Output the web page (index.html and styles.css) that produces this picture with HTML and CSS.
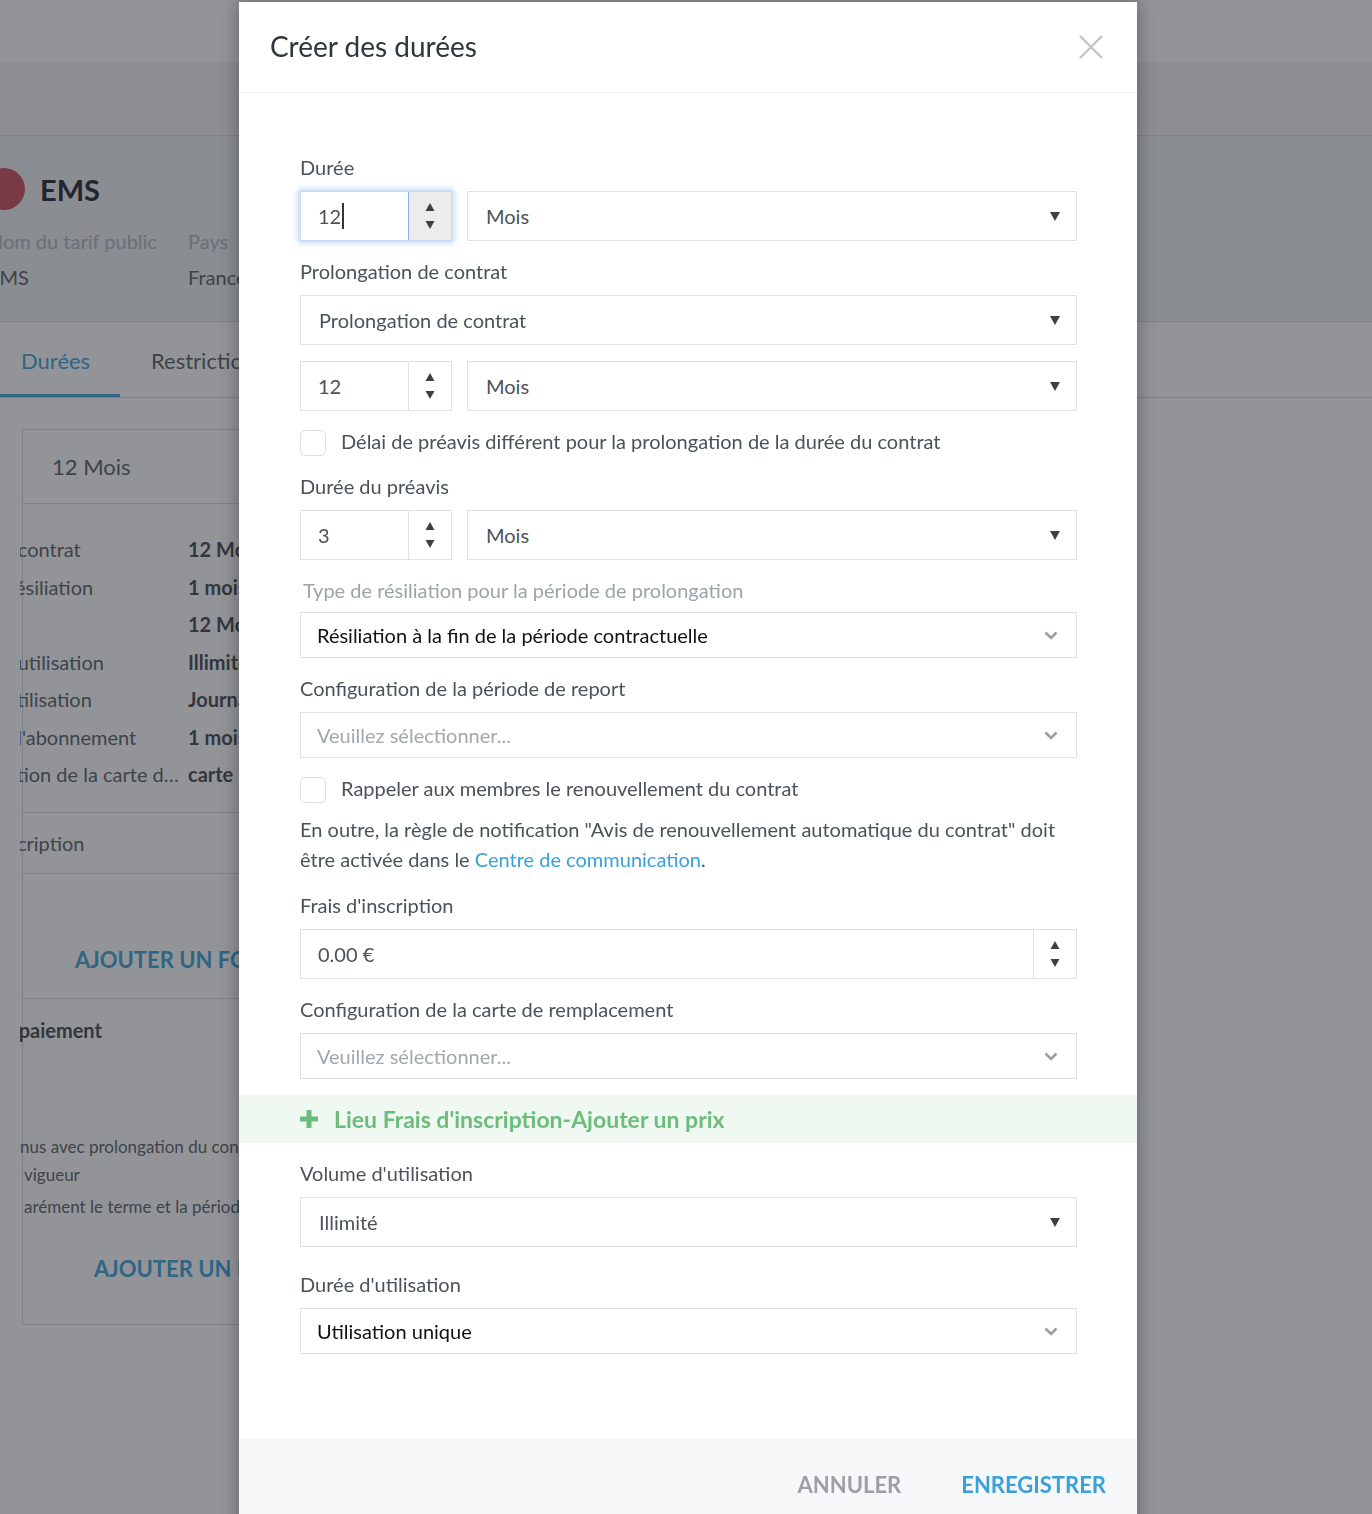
FILE: index.html
```html
<!DOCTYPE html>
<html lang="fr">
<head>
    <meta charset="UTF-8">
    <meta name="viewport" content="width=device-width, initial-scale=1.0">
    <title>Créer des durées</title>
    <link rel="stylesheet" href="styles.css">
</head>
<body>
    <div class="page">
        <div class="topbar"></div>
        <div class="subbar"></div>
        <div class="tariff-head">
            <div class="tariff-title"><span class="dot"></span><h2>EMS</h2></div>
            <div class="tariff-meta">
                <div class="meta-col">
                    <div class="meta-key">Nom du tarif public</div>
                    <div class="meta-val">EMS</div>
                </div>
                <div class="meta-col">
                    <div class="meta-key">Pays</div>
                    <div class="meta-val">France</div>
                </div>
            </div>
        </div>
        <div class="tabs">
            <div class="tab active">Durées</div>
            <div class="tab">Restrictions</div>
        </div>
        <div class="content">
            <div class="card">
                <div class="card-head">12 Mois</div>
                <div class="card-rows">
                    <div class="row"><div class="row-key"><span>Durée du contrat</span></div><div class="row-val">12 Mois</div></div>
                    <div class="row"><div class="row-key"><span>Délai de résiliation</span></div><div class="row-val">1 mois</div></div>
                    <div class="row"><div class="row-key"><span>Report</span></div><div class="row-val">12 Mois</div></div>
                    <div class="row"><div class="row-key"><span>Volume d'utilisation</span></div><div class="row-val">Illimité</div></div>
                    <div class="row"><div class="row-key"><span>Durée d'utilisation</span></div><div class="row-val">Journalier</div></div>
                    <div class="row"><div class="row-key"><span>Durée de l'abonnement</span></div><div class="row-val">1 mois</div></div>
                    <div class="row"><div class="row-key"><span>Configuration de la carte de remplacement</span></div><div class="row-val">carte</div></div>
                </div>
                <div class="card-section"><div class="row-key"><span>Frais d'inscription</span></div></div>
                <div class="card-add"><span>AJOUTER UN FORFAIT</span></div>
                <div class="card-pay">
                    <div class="row-key bold"><span>Moyen de paiement</span></div>
                    <div class="pay-line"></div>
                    <div class="pay-line spaced"></div>
                    <div class="pay-text">nus avec prolongation du contrat</div>
                    <div class="pay-text indent">vigueur</div>
                    <div class="pay-text indent spaced-sm">arément le terme et la période</div>
                    <div class="card-add second"><span>AJOUTER UN PRIX</span></div>
                </div>
            </div>
        </div>
    </div>

    <div class="overlay">
        <div class="modal">
            <div class="modal-header">
                <h1>Créer des durées</h1>
                <svg class="close" width="26" height="26" viewBox="0 0 26 26"><path d="M2 2 L24 24 M24 2 L2 24" stroke="#c2c4c7" stroke-width="2.4" fill="none"/></svg>
            </div>
            <div class="modal-body">
                <div class="field">
                    <label>Durée</label>
                    <div class="pair">
                        <div class="num focus">
                            <span class="num-value">12<span class="caret"></span></span>
                            <span class="spin"><svg width="10" height="28" viewBox="0 0 10 28"><polygon points="5,1 9.5,9 0.5,9" fill="#3d4147"/><polygon points="0.5,19 9.5,19 5,27" fill="#3d4147"/></svg></span>
                        </div>
                        <div class="select"><span>Mois</span><svg class="tri" width="10" height="9" viewBox="0 0 10 9"><polygon points="0,0 10,0 5,9" fill="#3d4147"/></svg></div>
                    </div>
                </div>

                <div class="field">
                    <label>Prolongation de contrat</label>
                    <div class="select"><span>Prolongation de contrat</span><svg class="tri" width="10" height="9" viewBox="0 0 10 9"><polygon points="0,0 10,0 5,9" fill="#3d4147"/></svg></div>
                    <div class="pair gap-top">
                        <div class="num">
                            <span class="num-value">12</span>
                            <span class="spin"><svg width="10" height="28" viewBox="0 0 10 28"><polygon points="5,1 9.5,9 0.5,9" fill="#3d4147"/><polygon points="0.5,19 9.5,19 5,27" fill="#3d4147"/></svg></span>
                        </div>
                        <div class="select"><span>Mois</span><svg class="tri" width="10" height="9" viewBox="0 0 10 9"><polygon points="0,0 10,0 5,9" fill="#3d4147"/></svg></div>
                    </div>
                </div>

                <div class="field check">
                    <span class="box"></span>
                    <span class="check-text">Délai de préavis différent pour la prolongation de la durée du contrat</span>
                </div>

                <div class="field">
                    <label>Durée du préavis</label>
                    <div class="pair">
                        <div class="num">
                            <span class="num-value">3</span>
                            <span class="spin"><svg width="10" height="28" viewBox="0 0 10 28"><polygon points="5,1 9.5,9 0.5,9" fill="#3d4147"/><polygon points="0.5,19 9.5,19 5,27" fill="#3d4147"/></svg></span>
                        </div>
                        <div class="select"><span>Mois</span><svg class="tri" width="10" height="9" viewBox="0 0 10 9"><polygon points="0,0 10,0 5,9" fill="#3d4147"/></svg></div>
                    </div>
                </div>

                <div class="field">
                    <label class="muted">Type de résiliation pour la période de prolongation</label>
                    <div class="rselect"><span class="value">Résiliation à la fin de la période contractuelle</span><svg class="chev" width="14" height="9" viewBox="0 0 14 9"><path d="M1.5 1.5 L7 7 L12.5 1.5" stroke="#9b9ea3" stroke-width="2.6" fill="none"/></svg></div>
                </div>

                <div class="field">
                    <label>Configuration de la période de report</label>
                    <div class="rselect"><span class="placeholder">Veuillez sélectionner...</span><svg class="chev" width="14" height="9" viewBox="0 0 14 9"><path d="M1.5 1.5 L7 7 L12.5 1.5" stroke="#9b9ea3" stroke-width="2.6" fill="none"/></svg></div>
                </div>

                <div class="field check">
                    <span class="box"></span>
                    <span class="check-text">Rappeler aux membres le renouvellement du contrat</span>
                </div>

                <p class="note">En outre, la règle de notification "Avis de renouvellement automatique du contrat" doit être activée dans le <a href="#">Centre de communication</a>.</p>

                <div class="field">
                    <label>Frais d'inscription</label>
                    <div class="num wide">
                        <span class="num-value">0.00 €</span>
                        <span class="spin"><svg width="10" height="28" viewBox="0 0 10 28"><polygon points="5,1 9.5,9 0.5,9" fill="#3d4147"/><polygon points="0.5,19 9.5,19 5,27" fill="#3d4147"/></svg></span>
                    </div>
                </div>

                <div class="field">
                    <label>Configuration de la carte de remplacement</label>
                    <div class="rselect"><span class="placeholder">Veuillez sélectionner...</span><svg class="chev" width="14" height="9" viewBox="0 0 14 9"><path d="M1.5 1.5 L7 7 L12.5 1.5" stroke="#9b9ea3" stroke-width="2.6" fill="none"/></svg></div>
                </div>

                <div class="add-price">
                    <svg width="18" height="18" viewBox="0 0 18 18"><rect x="6.5" y="0" width="5" height="18" fill="#6cbd7b"/><rect x="0" y="6.5" width="18" height="5" fill="#6cbd7b"/></svg>
                    <span>Lieu Frais d'inscription-Ajouter un prix</span>
                </div>

                <div class="field">
                    <label>Volume d'utilisation</label>
                    <div class="select"><span>Illimité</span><svg class="tri" width="10" height="9" viewBox="0 0 10 9"><polygon points="0,0 10,0 5,9" fill="#3d4147"/></svg></div>
                </div>

                <div class="field last">
                    <label>Durée d'utilisation</label>
                    <div class="rselect"><span class="value">Utilisation unique</span><svg class="chev" width="14" height="9" viewBox="0 0 14 9"><path d="M1.5 1.5 L7 7 L12.5 1.5" stroke="#9b9ea3" stroke-width="2.6" fill="none"/></svg></div>
                </div>
            </div>
            <div class="modal-footer">
                <button class="btn cancel">ANNULER</button>
                <button class="btn save">ENREGISTRER</button>
            </div>
        </div>
    </div>
</body>
</html>
```

FILE: styles.css
```css
html, body {
    margin: 0;
    height: 1514px;
    overflow: hidden;
}
body {
    font-family: "Lato", "Open Sans", sans-serif;
    color: #4b525b;
    background: #fff;
}

/* page behind the dialog */
.topbar {
    height: 62px;
    background: #fff;
}
.subbar {
    height: 73px;
    background: #f2f3f5;
    border-bottom: 1px solid #d6d9de;
}
.tariff-head {
    height: 186px;
    background: #eef0f2;
    border-bottom: 1px solid #d6d9de;
    box-sizing: border-box;
    padding-top: 32px;
}
.tariff-title {
    display: flex;
    align-items: center;
    margin-left: -17px;
    height: 42px;
}
.dot {
    width: 42px;
    height: 42px;
    border-radius: 50%;
    background: #ce4a58;
}
.tariff-title h2 {
    margin: 0 0 0 15px;
    font-size: 29px;
    font-weight: 700;
    color: #1c232c;
}
.tariff-meta {
    display: flex;
    margin-left: -12px;
    margin-top: 13px;
}
.meta-col {
    width: 200px;
    font-size: 20px;
    line-height: 36px;
}
.meta-key {
    color: #b0b5bb;
}
.meta-val {
    color: #575c63;
}
.tabs {
    display: flex;
    height: 76px;
    border-bottom: 1px solid #d6d9de;
    box-sizing: border-box;
}
.tab {
    font-size: 22px;
    line-height: 78px;
    color: #575c63;
    padding: 0 31px;
}
.tab.active {
    width: 120px;
    box-sizing: border-box;
    padding: 0 0 0 21px;
    color: #3aa0d8;
    border-bottom: 3px solid #3aa0d8;
}
.content {
    padding: 31px 0 0 22px;
}
.card {
    width: 640px;
    border: 1px solid #d6d9de;
    font-size: 20px;
}
.card-head {
    height: 73px;
    line-height: 73px;
    padding-left: 29px;
    font-size: 22px;
    color: #575c63;
    border-bottom: 1px solid #d6d9de;
}
.card-rows {
    padding: 27px 0 18px;
    border-bottom: 1px solid #d6d9de;
}
.row {
    display: flex;
    height: 37.5px;
    line-height: 37.5px;
}
.row-key {
    width: 168px;
    margin-left: -3px;
    overflow: hidden;
    white-space: nowrap;
    color: #575c63;
}
.row-key span {
    display: block;
    width: 254px;
    margin-left: -89px;
    overflow: hidden;
    text-overflow: ellipsis;
}
.row-val {
    font-weight: 700;
    color: #3f454c;
}
.card-section {
    height: 60px;
    line-height: 60px;
    border-bottom: 1px solid #d6d9de;
}
.card-add {
    height: 125px;
    box-sizing: border-box;
    padding: 72px 0 0 52px;
    font-size: 22px;
    font-weight: 700;
    color: #3aa0d8;
    border-bottom: 1px solid #d6d9de;
}
.card-add.second {
    border-bottom: none;
    height: auto;
    padding: 34px 0 42px 71px;
}
.card-pay .bold {
    font-weight: 700;
    line-height: 62px;
    color: #3f454c;
}
.card-pay .bold span {
    margin-left: -95px;
}
.pay-line {
    height: 28px;
}
.pay-line.spaced {
    margin-top: 16px;
}
.pay-text {
    font-size: 17px;
    line-height: 28px;
    white-space: nowrap;
    margin-left: -3px;
    color: #575c63;
}
.pay-text.indent {
    margin-left: 1px;
}
.pay-text.spaced-sm {
    margin-top: 4px;
}

/* dialog */
.overlay {
    position: fixed;
    inset: 0;
    background: rgba(38, 42, 50, 0.5);
    padding: 2px 0 0 239px;
}
.modal {
    width: 898px;
    background: #fff;
    box-shadow: 0 0 18px rgba(0, 0, 0, 0.35);
}
.modal-header {
    height: 91px;
    box-sizing: border-box;
    display: flex;
    align-items: center;
    justify-content: space-between;
    padding: 0 33px 0 31px;
    border-bottom: 1px solid #eceef0;
}
.modal-header h1 {
    margin: 0 0 2px;
    font-size: 28px;
    font-weight: 400;
    color: #30363d;
}
.modal-body {
    padding: 63px 60px 85px 61px;
    font-size: 20px;
}
.field {
    margin-bottom: 19px;
}
.field label {
    display: block;
    line-height: 22px;
    margin-bottom: 13px;
    color: #4b525b;
}
.field label.muted {
    color: #9ea3a9;
    margin-left: 3px;
    margin-bottom: 11px;
}
.pair {
    display: flex;
    gap: 15px;
}
.gap-top {
    margin-top: 16px;
}
.num, .select, .rselect {
    display: flex;
    align-items: center;
    box-sizing: border-box;
    border: 1px solid #dfe1e4;
    background: #fff;
    color: #4b525b;
}
.num {
    width: 152px;
    height: 50px;
}
.num.wide {
    width: 100%;
}
.num-value {
    flex: 1;
    padding-left: 17px;
    display: flex;
    align-items: center;
}
.caret {
    display: inline-block;
    width: 2px;
    height: 26px;
    background: #30363d;
    margin-left: 1px;
}
.spin {
    width: 42px;
    height: 100%;
    border-left: 1px solid #dfe1e4;
    display: flex;
    align-items: center;
    justify-content: center;
}
.num.focus {
    border-color: #c9daf0;
    box-shadow: 0 0 6px 2px rgba(110, 165, 235, 0.45);
}
.num.focus .spin {
    background: #ececec;
    border-left-color: #7fb2e6;
}
.select {
    flex: 1;
    height: 50px;
    padding: 0 16px 0 18px;
    justify-content: space-between;
}
.rselect {
    height: 46px;
    padding: 0 18px 0 16px;
    justify-content: space-between;
}
.rselect .value {
    color: #111;
}
.rselect .placeholder {
    color: #a3a7ac;
}
.check {
    display: flex;
    align-items: center;
    gap: 15px;
    height: 26px;
}
.check-text {
    margin-top: -4px;
}
.box {
    width: 26px;
    height: 26px;
    box-sizing: border-box;
    border: 1px solid #dcdee1;
    border-radius: 5px;
}
.note {
    margin: -8px 0 20px;
    line-height: 30px;
}
.note a {
    color: #3aa0d8;
    text-decoration: none;
}
.add-price {
    display: flex;
    align-items: center;
    gap: 16px;
    height: 48px;
    margin: -3px -60px 19px -61px;
    padding-left: 61px;
    background: #eff8f1;
    color: #6cbd7b;
    font-size: 23px;
    font-weight: 700;
}
.field.last {
    margin-top: 26px;
    margin-bottom: 0;
}
.modal-footer {
    display: flex;
    justify-content: flex-end;
    gap: 60px;
    height: 95px;
    padding: 30px 31px 0 0;
    box-sizing: border-box;
    background: #f6f7f9;
}
.btn {
    border: none;
    background: none;
    padding: 0;
    font-family: inherit;
    font-size: 22px;
    font-weight: 700;
    height: 30px;
}
.cancel {
    color: #9c9fa4;
}
.save {
    color: #3aa0d8;
}
```
